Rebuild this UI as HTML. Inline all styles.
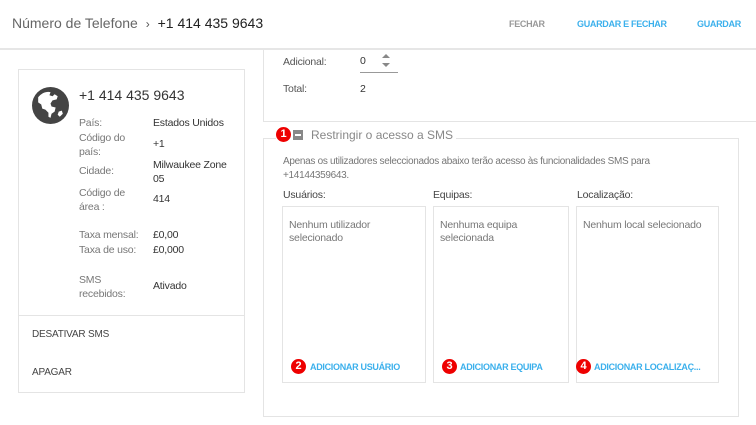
<!DOCTYPE html>
<html><head><meta charset="utf-8"><style>
*{margin:0;padding:0;box-sizing:border-box}
body{width:756px;height:425px;overflow:hidden;background:#fff;font-family:"Liberation Sans",sans-serif;color:#333;position:relative}
.a{position:absolute;white-space:nowrap}
.l{font-size:10.5px;color:#777;letter-spacing:-0.2px}
.v{font-size:10.5px;color:#333;letter-spacing:-0.2px}
.box{position:absolute;border:1px solid #e4e4e4;background:#fff}
.blue{color:#3bb0ec;font-size:9px;font-weight:bold;letter-spacing:-0.3px}
.badge{position:absolute;width:15px;height:15px;border-radius:50%;background:#e00;color:#fff;font-size:11px;font-weight:bold;text-align:center;line-height:15px}
</style></head><body>
<div class="a" style="left:12px;top:15px;font-size:14px;color:#666">Número de Telefone <span style="color:#555;font-size:12px;margin:0 4px">&rsaquo;</span> <span style="color:#222">+1 414 435 9643</span></div>
<div class="a" style="left:509px;top:19px;font-size:9px;font-weight:bold;color:#999;letter-spacing:-0.3px">FECHAR</div>
<div class="a blue" style="left:577px;top:19px">GUARDAR E FECHAR</div>
<div class="a blue" style="left:697px;top:19px">GUARDAR</div>

<div class="box" style="left:263px;top:48px;width:500px;height:74px;border-top:none"></div>
<div class="a" style="left:0;top:48px;width:756px;height:2px;background:#e6e6e6"></div>
<div class="a v" style="left:283px;top:56px;color:#555">Adicional:</div>
<div class="a v" style="left:360px;top:55px">0</div>
<div class="a" style="left:382px;top:54px;width:0;height:0;border-left:4px solid transparent;border-right:4px solid transparent;border-bottom:4px solid #888"></div>
<div class="a" style="left:382px;top:63px;width:0;height:0;border-left:4px solid transparent;border-right:4px solid transparent;border-top:4px solid #888"></div>
<div class="a" style="left:360px;top:72px;width:38px;height:1px;background:#999"></div>
<div class="a v" style="left:283px;top:83px;color:#555">Total:</div>
<div class="a v" style="left:360px;top:83px">2</div>

<div class="box" style="left:263px;top:138px;width:476px;height:279px"></div>
<div class="a" style="left:276px;top:128px;width:180px;height:20px;background:#fff"></div>
<div class="badge" style="left:276px;top:127px">1</div>
<div class="a" style="left:293px;top:130px;width:10px;height:10px;background:#888"></div>
<div class="a" style="left:295px;top:134px;width:6px;height:2px;background:#fff"></div>
<div class="a" style="left:311px;top:128px;font-size:12px;color:#888">Restringir o acesso a SMS</div>
<div class="a l" style="left:283px;top:155px;line-height:14px;font-size:10px;letter-spacing:-0.3px">Apenas os utilizadores seleccionados abaixo terão acesso às funcionalidades SMS para<br>+14144359643.</div>
<div class="a v" style="left:283px;top:189px;color:#444">Usuários:</div>
<div class="a v" style="left:433px;top:189px;color:#444">Equipas:</div>
<div class="a v" style="left:577px;top:189px;color:#444">Localização:</div>
<div class="box" style="left:282px;top:206px;width:144px;height:177px"></div>
<div class="box" style="left:433px;top:206px;width:136px;height:177px"></div>
<div class="box" style="left:576px;top:206px;width:143px;height:177px"></div>
<div class="a l" style="left:289px;top:219px;line-height:13px">Nenhum utilizador<br>selecionado</div>
<div class="a l" style="left:440px;top:219px;line-height:13px">Nenhuma equipa<br>selecionada</div>
<div class="a l" style="left:583px;top:219px;line-height:13px">Nenhum local selecionado</div>
<div class="badge" style="left:291px;top:359px">2</div>
<div class="a blue" style="left:310px;top:362px">ADICIONAR USUÁRIO</div>
<div class="badge" style="left:442px;top:359px">3</div>
<div class="a blue" style="left:460px;top:362px">ADICIONAR EQUIPA</div>
<div class="badge" style="left:576px;top:359px">4</div>
<div class="a blue" style="left:594px;top:362px">ADICIONAR LOCALIZAÇ...</div>

<div class="box" style="left:18px;top:69px;width:227px;height:324px"></div>
<div class="a" style="left:18px;top:315px;width:227px;height:1px;background:#e4e4e4"></div>
<svg class="a" style="left:32px;top:87px" width="37" height="37" viewBox="0 0 36 36"><circle cx="18" cy="18" r="18" fill="#444"/><path d="M6 10c3-4 8-6 12-5l-1 3 3 1 2-2 3 2-1 3-4 1-2 3 1 3 4 1-1 4-3 2-1 4-2-1 0-4-3-3-3-1-1-4-3-2z" fill="#fff"/><path d="M26 24l3-1 1 3-3 3-2-2z" fill="#fff"/></svg>
<div class="a" style="left:79px;top:87px;font-size:14px;color:#333">+1 414 435 9643</div>
<div class="a l" style="left:79px;top:117px">País:</div><div class="a v" style="left:153px;top:117px">Estados Unidos</div>
<div class="a l" style="left:79px;top:131px;line-height:14px">Código do<br>país:</div><div class="a v" style="left:153px;top:138px">+1</div>
<div class="a l" style="left:79px;top:165px">Cidade:</div><div class="a v" style="left:153px;top:158px;line-height:14px">Milwaukee Zone<br>05</div>
<div class="a l" style="left:79px;top:186px;line-height:14px">Código de<br>área :</div><div class="a v" style="left:153px;top:193px">414</div>
<div class="a l" style="left:79px;top:229px">Taxa mensal:</div><div class="a v" style="left:153px;top:229px">£0,00</div>
<div class="a l" style="left:79px;top:244px">Taxa de uso:</div><div class="a v" style="left:153px;top:244px">£0,000</div>
<div class="a l" style="left:79px;top:273px;line-height:14px">SMS<br>recebidos:</div><div class="a v" style="left:153px;top:280px">Ativado</div>
<div class="a" style="left:32px;top:329px;font-size:10px;color:#444;letter-spacing:-0.2px">DESATIVAR SMS</div>
<div class="a" style="left:32px;top:367px;font-size:10px;color:#444;letter-spacing:-0.2px">APAGAR</div>
</body></html>
